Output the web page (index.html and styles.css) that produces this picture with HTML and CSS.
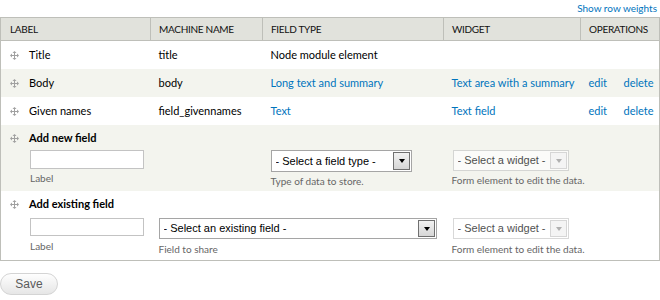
FILE: index.html
```html
<!DOCTYPE html>
<html lang="en">
<head>
  <meta charset="UTF-8" />
  <title>Manage fields</title>
  <link rel="stylesheet" href="styles.css">
</head>
<body>

  <div class="weights-toggle"><a href="#">Show row weights</a></div>

  <table class="field-table">
    <colgroup>
      <col class="col-label">
      <col class="col-machine">
      <col class="col-type">
      <col class="col-widget">
      <col class="col-edit">
      <col class="col-delete">
    </colgroup>
    <thead>
      <tr>
        <th>Label</th>
        <th>Machine name</th>
        <th>Field type</th>
        <th>Widget</th>
        <th colspan="2">Operations</th>
      </tr>
    </thead>
    <tbody>
      <tr class="odd">
        <td><span class="handle"><svg width="9" height="9" viewBox="0 0 9 9"><path d="M4.5 1.5v6M1.5 4.5h6" stroke="#a0a0a0" stroke-width="1"/><path d="M4.5 0L2.5 2h4zM4.5 9L2.5 7h4zM0 4.5L2 2.5v4zM9 4.5L7 2.5v4z" fill="#a0a0a0"/></svg></span>Title</td>
        <td>title</td>
        <td>Node module element</td>
        <td></td>
        <td class="op"></td>
        <td class="op"></td>
      </tr>
      <tr class="even">
        <td><span class="handle"><svg width="9" height="9" viewBox="0 0 9 9"><path d="M4.5 1.5v6M1.5 4.5h6" stroke="#a0a0a0" stroke-width="1"/><path d="M4.5 0L2.5 2h4zM4.5 9L2.5 7h4zM0 4.5L2 2.5v4zM9 4.5L7 2.5v4z" fill="#a0a0a0"/></svg></span>Body</td>
        <td>body</td>
        <td><a href="#">Long text and summary</a></td>
        <td><a href="#">Text area with a summary</a></td>
        <td class="op"><a href="#">edit</a></td>
        <td class="op"><a href="#">delete</a></td>
      </tr>
      <tr class="odd">
        <td><span class="handle"><svg width="9" height="9" viewBox="0 0 9 9"><path d="M4.5 1.5v6M1.5 4.5h6" stroke="#a0a0a0" stroke-width="1"/><path d="M4.5 0L2.5 2h4zM4.5 9L2.5 7h4zM0 4.5L2 2.5v4zM9 4.5L7 2.5v4z" fill="#a0a0a0"/></svg></span>Given names</td>
        <td>field_givennames</td>
        <td><a href="#">Text</a></td>
        <td><a href="#">Text field</a></td>
        <td class="op"><a href="#">edit</a></td>
        <td class="op"><a href="#">delete</a></td>
      </tr>
      <tr class="even add-row">
        <td>
          <div class="add-title"><span class="handle"><svg width="9" height="9" viewBox="0 0 9 9"><path d="M4.5 1.5v6M1.5 4.5h6" stroke="#a0a0a0" stroke-width="1"/><path d="M4.5 0L2.5 2h4zM4.5 9L2.5 7h4zM0 4.5L2 2.5v4zM9 4.5L7 2.5v4z" fill="#a0a0a0"/></svg></span>Add new field</div>
          <input class="text-input" type="text" />
          <div class="desc">Label</div>
        </td>
        <td></td>
        <td class="add-cell">
          <span class="select-wrap w-type"><select><option>- Select a field type -</option></select></span>
          <div class="desc">Type of data to store.</div>
        </td>
        <td class="add-cell">
          <span class="select-wrap w-widget disabled"><select disabled><option>- Select a widget -</option></select></span>
          <div class="desc">Form element to edit the data.</div>
        </td>
        <td colspan="2"></td>
      </tr>
      <tr class="odd add-row existing">
        <td>
          <div class="add-title"><span class="handle"><svg width="9" height="9" viewBox="0 0 9 9"><path d="M4.5 1.5v6M1.5 4.5h6" stroke="#a0a0a0" stroke-width="1"/><path d="M4.5 0L2.5 2h4zM4.5 9L2.5 7h4zM0 4.5L2 2.5v4zM9 4.5L7 2.5v4z" fill="#a0a0a0"/></svg></span>Add existing field</div>
          <input class="text-input" type="text" />
          <div class="desc">Label</div>
        </td>
        <td class="add-cell" colspan="2">
          <span class="select-wrap w-existing"><select><option>- Select an existing field -</option></select></span>
          <div class="desc">Field to share</div>
        </td>
        <td class="add-cell">
          <span class="select-wrap w-widget disabled"><select disabled><option>- Select a widget -</option></select></span>
          <div class="desc">Form element to edit the data.</div>
        </td>
        <td colspan="2"></td>
      </tr>
    </tbody>
  </table>

  <button class="save-btn">Save</button>

</body>
</html>
```

FILE: styles.css
```css
* { box-sizing: border-box; }
body {
  margin: 0;
  font-family: Lato, sans-serif;
  font-size: 11px;
  color: #000;
  background: #fff;
}

a {
  color: #0074bd;
  text-decoration: none;
}

.weights-toggle {
  text-align: right;
  height: 17px;
  line-height: 16px;
  font-size: 10px;
  padding-right: 3px;
}

.field-table {
  width: 660px;
  table-layout: fixed;
  border-collapse: collapse;
  border: 1px solid #bebfb9;
}

.col-label { width: 150px; }
.col-machine { width: 112px; }
.col-type { width: 181px; }
.col-widget { width: 137px; }
.col-edit { width: 34px; }

.field-table th {
  background: #e1e2dc;
  border: 1px solid #bebfb9;
  text-align: left;
  font-weight: normal;
  font-size: 10px;
  letter-spacing: -0.3px;
  text-transform: uppercase;
  height: 23px;
  padding: 0 8px;
  color: #111;
}

.field-table th:first-child { padding-left: 9px; }

.field-table td {
  padding: 0 8px;
  height: 28px;
  vertical-align: middle;
  white-space: nowrap;
}

.field-table td.op + td.op { padding: 0 0 0 9px; }

tr.odd { background: #fff; }
tr.even { background: #f3f4ee; }

.handle {
  display: inline-block;
  width: 20px;
  padding-left: 1px;
  vertical-align: -1px;
}

.add-row td {
  vertical-align: top;
  padding-top: 6px;
  padding-bottom: 7px;
}

.add-row.existing td:first-child { padding-bottom: 8px; }

.add-title {
  font-weight: bold;
  line-height: 14px;
  height: 14px;
}

.text-input {
  display: block;
  margin: 5px 0 0 21px;
  width: 114px;
  height: 19px;
  border: 1px solid #c3c3c3;
  background: #fff;
}

.existing .text-input { margin-top: 7px; height: 18px; }

.desc {
  font-size: 10px;
  line-height: 12px;
  color: #666;
  margin-top: 3px;
}

.add-row td:first-child .desc { padding-left: 21px; }
.existing .desc { margin-top: 4px; }

.field-table td.add-cell { padding-top: 25px; padding-bottom: 0; }
.field-table .existing td.add-cell { padding-top: 27px; }

.select-wrap {
  position: relative;
  display: inline-block;
  height: 22px;
}

.select-wrap select {
  appearance: none;
  -webkit-appearance: none;
  width: 100%;
  height: 100%;
  border: 1px solid #a5a5a5;
  border-radius: 0;
  background: #fff;
  font-family: 'Liberation Sans', Arial, sans-serif;
  font-size: 11px;
  color: #000;
  padding: 0 0 0 4px;
}

.select-wrap::after {
  content: "";
  position: absolute;
  top: 2px;
  right: 2px;
  bottom: 2px;
  width: 15px;
  border: 1px solid #707070;
  background: linear-gradient(#f2f2f2, #d6d6d6);
}

.select-wrap::before {
  content: "";
  position: absolute;
  z-index: 1;
  right: 7px;
  top: 9px;
  border-left: 3px solid transparent;
  border-right: 3px solid transparent;
  border-top: 4px solid #000;
}

.select-wrap.disabled select { color: #000; border-color: #c8c8c8; }
.select-wrap.disabled::after { border-color: #d6d6d6; background: #f4f4f4; }
.select-wrap.disabled::before { border-top-color: #b0b0b0; }

.w-type { width: 141px; }
.w-widget { width: 116px; height: 21px; margin-left: 1px; }
.w-existing { width: 278px; height: 21px; }

.save-btn {
  display: block;
  margin-top: 12px;
  width: 58px;
  height: 22px;
  border: 1px solid #d4d4d4;
  border-radius: 12px;
  background: linear-gradient(#fefefe, #e6e6e6);
  font-family: 'Liberation Sans', Arial, sans-serif;
  font-size: 12px;
  color: #5a5a5a;
  padding: 0;
}
```
